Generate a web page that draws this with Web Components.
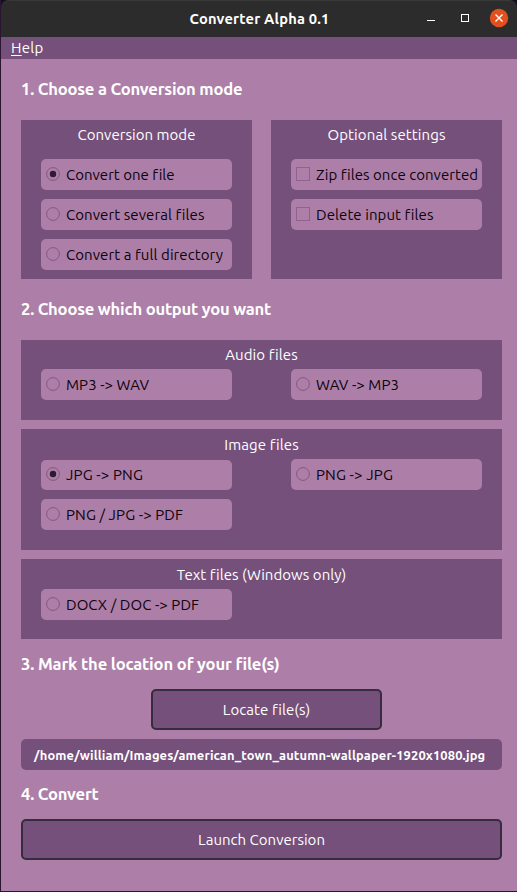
<!DOCTYPE html>
<html lang="en">
<head>
<meta charset="utf-8">
<title>Converter Alpha 0.1</title>
<style>
html, body { margin: 0; height: 100%; background: #160e20; }
body { font: 15px/20px Ubuntu, "Noto Sans", sans-serif; color: #fff; overflow: hidden; }
</style>
</head>
<body>
<converter-app></converter-app>
<script>
const define = (name, html, setup) => {
  const template = document.createElement('template');
  template.innerHTML = html;
  customElements.define(name, class extends HTMLElement {
    connectedCallback() {
      if (this.shadowRoot) return;
      this.attachShadow({ mode: 'open' }).append(template.content.cloneNode(true));
      if (setup) setup(this, this.shadowRoot);
    }
  });
};

/* Text whose letter spacing is tuned so that it fills the width in "w". */
define('fit-text', `
<style>
:host { display: block; white-space: nowrap; flex: none; }
span { display: inline-block; vertical-align: top; }
::slotted(u) { text-decoration-thickness: 1px; text-underline-offset: 2px; }
</style><span><slot></slot></span>`, (el, root) => {
  const w = Number(el.getAttribute('w'));
  const span = root.querySelector('span');
  const n = el.textContent.length;
  const gap = (w - span.getBoundingClientRect().width) / n;
  span.style.letterSpacing = gap.toFixed(3) + 'px';
});

define('title-bar', `
<style>
:host { display: grid; grid-template-columns: 1fr; height: 37px; box-sizing: border-box; background: #2c2c2c; border-top: 1px solid #393939; border-radius: 8px 8px 0 0; position: relative; }
.title { display: flex; justify-content: center; align-items: center; font-weight: 700; font-size: 14.67px; color: #fff; padding: 0 0 1px 1px; }
.controls { position: absolute; right: 0; top: -1px; }
</style>
<div class="title"><slot></slot></div>
<svg class="controls" width="97" height="37" viewBox="420 0 97 37" fill="none">
<path d="M427 20.5h8" stroke="#fff"/>
<rect x="461.5" y="14.5" width="7" height="7" stroke="#fff"/>
<circle cx="499" cy="18" r="9.2" fill="#e2501f"/>
<path d="M495.5 14.5l7 7m0-7l-7 7" stroke="#fff" stroke-width="1.4"/>
</svg>`);

define('menu-bar', `
<style>:host { display: flex; align-items: center; height: 22px; background: #75507b; padding-left: 10px; box-sizing: border-box; }</style>
<slot></slot>`);

define('step-heading', `
<style>:host { display: flex; align-items: center; height: 61px; font-weight: 700; font-size: 16.6px; box-sizing: border-box; padding-bottom: 1px; }
:host([tight]) { height: 50px; } :host([last]) { height: 49px; }</style>
<slot></slot>`);

define('option-panel', `
<style>
:host { display: block; background: #75507b; padding: 5px 20px 20px; box-sizing: border-box; }
header { display: flex; justify-content: center; height: 24px; }
:host([roomy]) { padding-bottom: 9px; }
:host([roomy]) header { height: 34px; }
.items { display: grid; grid-template-columns: 1fr 1fr; gap: 9px 59px; }
:host([roomy]) .items { grid-template-columns: 1fr; }
</style>
<header><slot name="label"></slot></header>
<div class="items"><slot></slot></div>`);

define('choice-item', `
<style>
:host { display: flex; align-items: center; gap: 6px; height: 31px; padding-left: 5px; box-sizing: border-box; border-radius: 5px; background: #ad7fa8; color: #0c020c; }
svg { flex: none; margin-top: -1px; }
.box, .dot { display: none; }
:host([check]) .box { display: inline; }
:host([check]) .ring { display: none; }
:host([checked]) .dot { display: inline; }
</style>
<svg width="14" height="14" viewBox="0 0 14 14" fill="none">
<circle class="ring" cx="7" cy="7" r="6.4" stroke="#83577f"/>
<rect class="box" x=".5" y=".5" width="13" height="13" stroke="#8f628f"/>
<circle class="dot" cx="7" cy="7" r="3.2" fill="#2e1b31"/>
</svg><slot></slot>`);

define('push-button', `
<style>
:host { display: block; }
button { display: flex; align-items: center; justify-content: center; width: 100%; height: 41px; padding: 0; box-sizing: border-box; border: 2px solid #372b3f; border-radius: 5px; background: #75507b; color: #fff; font: inherit; }
</style><button><slot></slot></button>`);

define('path-field', `
<style>:host { display: flex; align-items: center; height: 31px; box-sizing: border-box; padding-left: 13px; border-radius: 5px; background: #75507b; font-weight: 700; font-size: 12.9px; }</style>
<slot></slot>`);

define('converter-app', `
<style>
:host { display: flex; flex-direction: column; width: 517px; height: 892px; box-sizing: border-box; border: solid #2c1530; border-width: 0 0 1px 1px; }
main { flex: 1; padding: 0 15px 0 20px; background: #ad7fa8; }
.pair { display: grid; grid-template-columns: 1fr 1fr; gap: 19px; }
.stack { display: grid; gap: 9px; }
.locate { width: 231px; margin: 0 auto 9px 130px; }
.short { height: 30px; margin-top: 1px; padding-bottom: 1px; }
</style>
<title-bar><fit-text w="140">Converter Alpha 0.1</fit-text></title-bar>
<menu-bar><fit-text w="32.4"><u>H</u>elp</fit-text></menu-bar>
<main>
<step-heading><fit-text w="221.3">1. Choose a Conversion mode</fit-text></step-heading>
<div class="pair">
<option-panel roomy><fit-text slot="label" w="118">Conversion mode</fit-text>
<choice-item checked><fit-text w="108">Convert one file</fit-text></choice-item>
<choice-item><fit-text w="138">Convert several files</fit-text></choice-item>
<choice-item><fit-text w="157">Convert a full directory</fit-text></choice-item></option-panel>
<option-panel roomy><fit-text slot="label" w="118">Optional settings</fit-text>
<choice-item check><fit-text w="161.5">Zip files once converted</fit-text></choice-item>
<choice-item check><fit-text w="117">Delete input files</fit-text></choice-item></option-panel>
</div>
<step-heading><fit-text w="250">2. Choose which output you want</fit-text></step-heading>
<div class="stack">
<option-panel><fit-text slot="label" w="72">Audio files</fit-text>
<choice-item><fit-text w="83">MP3 -&gt; WAV</fit-text></choice-item>
<choice-item><fit-text w="83">WAV -&gt; MP3</fit-text></choice-item></option-panel>
<option-panel style="padding-top:6px"><fit-text slot="label" w="74">Image files</fit-text>
<choice-item class="short" checked><fit-text w="77">JPG -&gt; PNG</fit-text></choice-item>
<choice-item><fit-text w="77">PNG -&gt; JPG</fit-text></choice-item>
<choice-item><fit-text w="117">PNG / JPG -&gt; PDF</fit-text></choice-item></option-panel>
<option-panel style="padding-top:6px;padding-bottom:19px"><fit-text slot="label" w="169">Text files (Windows only)</fit-text>
<choice-item><fit-text w="133">DOCX / DOC -&gt; PDF</fit-text></choice-item></option-panel>
</div>
<step-heading tight><fit-text w="258.3">3. Mark the location of your file(s)</fit-text></step-heading>
<push-button class="locate"><fit-text w="87">Locate file(s)</fit-text></push-button>
<path-field><fit-text w="451.3">/home/william/Images/american_town_autumn-wallpaper-1920x1080.jpg</fit-text></path-field>
<step-heading last><fit-text w="77.5">4. Convert</fit-text></step-heading>
<push-button><fit-text w="127">Launch Conversion</fit-text></push-button>
</main>`);
</script>
</body>
</html>
